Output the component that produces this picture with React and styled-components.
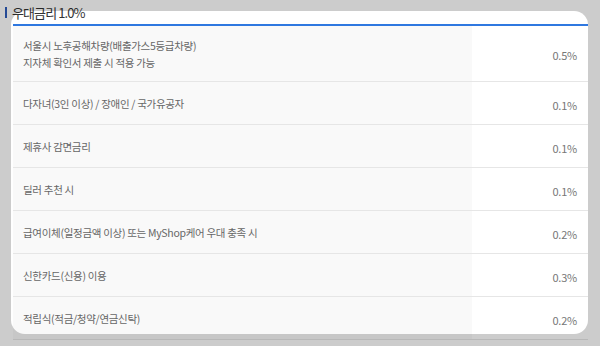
import React from "react";
import styled, { createGlobalStyle } from "styled-components";

const Global = createGlobalStyle`
  html, body { margin: 0; padding: 0; background: #ffffff; }
  body { font-family: "Noto Sans CJK KR", "Noto Sans", sans-serif; }
`;

const Page = styled.div`
  position: relative;
  width: 600px;
  height: 346px;
  overflow: hidden;
  background: #ffffff;
`;

const Title = styled.h3`
  margin: 0;
  margin-left: 5px;
  padding-top: 7px;
  display: flex;
  align-items: center;
  height: 11px;
  font-size: 13px;
  font-weight: 400;
  letter-spacing: -0.9px;
  color: #333;
`;

const TitleBar = styled.span`
  width: 2px;
  height: 11px;
  background: #2f5dbb;
  margin-right: 5px;
`;

const Table = styled.div`
  margin: 6px 12px 0 13px;
  border-top: 2px solid #2f78e0;
`;

const Row = styled.div`
  display: grid;
  grid-template-columns: 459px 1fr;
  min-height: 42px;
  border-bottom: 1px solid #e6e6e6;
`;

const Label = styled.div`
  background: #f9f9f9;
  padding: 11px 10px 10px;
  display: flex;
  flex-direction: column;
  justify-content: center;
  font-size: 10.5px;
  line-height: 17px;
  letter-spacing: -0.3px;
  color: #666;
`;

const Value = styled.div`
  display: flex;
  align-items: center;
  justify-content: flex-end;
  padding: 3px 11px 0 0;
  font-size: 11px;
  letter-spacing: -0.2px;
  color: #777;
`;

const Spotlight = styled.div`
  position: absolute;
  left: 11px;
  top: 11px;
  width: 577px;
  height: 323px;
  border-radius: 14px;
  box-shadow: 0 0 0 2000px rgba(0, 0, 0, 0.2);
  pointer-events: none;
`;

const rows = [
  { label: ["서울시 노후공해차량(배출가스5등급차량)", "지자체 확인서 제출 시 적용 가능"], value: "0.5%" },
  { label: ["다자녀(3인 이상) / 장애인 / 국가유공자"], value: "0.1%" },
  { label: ["제휴사 감면금리"], value: "0.1%" },
  { label: ["딜러 추천 시"], value: "0.1%" },
  { label: ["급여이체(일정금액 이상) 또는 MyShop케어 우대 충족 시"], value: "0.2%" },
  { label: ["신한카드(신용) 이용"], value: "0.3%" },
  { label: ["적립식(적금/청약/연금신탁)"], value: "0.2%" },
];

export default function App() {
  return (
    <Page>
      <Global />
      <Title>
        <TitleBar />
        우대금리 1.0%
      </Title>
      <Table>
        {rows.map((r, i) => (
          <Row key={i}>
            <Label>
              {r.label.map((l, j) => (
                <span key={j}>{l}</span>
              ))}
            </Label>
            <Value>{r.value}</Value>
          </Row>
        ))}
      </Table>
      <Spotlight />
    </Page>
  );
}
